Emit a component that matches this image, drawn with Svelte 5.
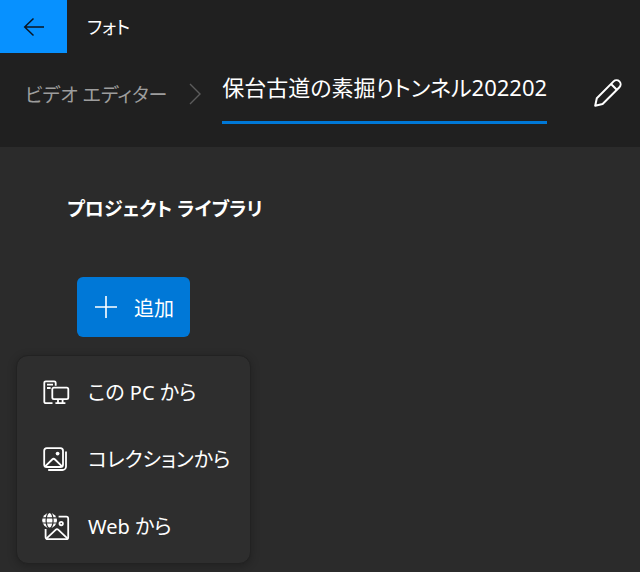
<script>
  const PROJECT_NAME = '保台古道の素掘りトンネル202202';

  const SOURCES = [
    { id: 'pc', label: 'この PC から' },
    { id: 'collection', label: 'コレクションから' },
    { id: 'web', label: 'Web から' },
  ];

  let menuOpen = $state(true);
</script>

<div class="app">
  <header class="top">
    <div class="title-bar">
      <button class="back" aria-label="戻る">
        <svg width="22" height="20" viewBox="0 0 22 20" fill="none" stroke="currentColor" stroke-width="1.5">
          <path d="M21 10H1.5M10.5 1.5 1.7 10l8.8 8.5" />
        </svg>
      </button>
      <span class="app-name">フォト</span>
    </div>

    <nav class="crumbs">
      <a class="crumb" href="#editor">ビデオ エディター</a>
      <svg class="chevron" width="12" height="22" viewBox="0 0 12 22" fill="none" stroke="currentColor" stroke-width="1.4">
        <path d="M1 1l10 10L1 21" />
      </svg>
      <h1 class="project">{PROJECT_NAME}</h1>
      <button class="edit" aria-label="名前の変更">
        <svg width="28" height="28" viewBox="0 0 28 28" fill="none" stroke="currentColor" stroke-width="2" stroke-linejoin="round">
          <path d="M1.2 26.8l1.6-7.6L19.6 2.4a4.1 4.1 0 0 1 5.8 5.8L8.6 25z" />
          <path d="M17 5l5.8 5.8" />
        </svg>
      </button>
    </nav>
  </header>

  <main class="library">
    <h2>プロジェクト ライブラリ</h2>

    <div class="add-wrap">
      <button class="add" aria-expanded={menuOpen} onclick={() => (menuOpen = !menuOpen)}>
        <svg width="22" height="22" viewBox="0 0 22 22" fill="none" stroke="currentColor" stroke-width="1.6">
          <path d="M11 0v22M0 11h22" />
        </svg>
        追加
      </button>

      {#if menuOpen}
        <div class="menu" role="menu">
          {#each SOURCES as source (source.id)}
            <button class="menu-item" role="menuitem">
              <svg width="28" height="28" viewBox="0 0 28 28" fill="none" stroke="currentColor" stroke-width="1.8" stroke-linejoin="round">
                {#if source.id === 'pc'}
                  <path d="M10.5 24.2H3.8a1.5 1.5 0 0 1-1.5-1.5V3.8a1.5 1.5 0 0 1 1.5-1.5h8.4a1.5 1.5 0 0 1 1.5 1.5v3" />
                  <path d="M5 5.6h6M5 9h3.6" />
                  <rect x="10.3" y="8.6" width="16" height="11.6" rx="1.6" />
                  <path d="M16 20.2v3.6M20.6 20.2v3.6M13.4 24.2h10" />
                {:else if source.id === 'collection'}
                  <rect x="2.2" y="2.2" width="18.8" height="18.8" rx="2.6" />
                  <path d="M3.4 20.2l6.8-6.7a2 2 0 0 1 2.8 0l6.8 6.7" />
                  <circle cx="15.6" cy="7.6" r="1.9" fill="currentColor" stroke="none" />
                  <path d="M24 5.6v14.8a3.6 3.6 0 0 1-3.6 3.6H6.2" />
                {:else}
                  <path d="M16.6 3.6h7.6a2 2 0 0 1 2 2v18.6a2 2 0 0 1-2 2H5.6a2 2 0 0 1-2-2V16" />
                  <path d="M4.6 25.4l9-8.6a2 2 0 0 1 2.8 0l9 8.6" />
                  <circle cx="19.2" cy="10.6" r="1.7" />
                  <circle cx="7.6" cy="7.4" r="7.4" fill="currentColor" stroke="none" />
                  <g class="gap">
                    <ellipse cx="7.6" cy="7.4" rx="3.5" ry="8" />
                    <path d="M0 4.8h15.2M0 10h15.2" />
                  </g>
                {/if}
              </svg>
              <span>{source.label}</span>
            </button>
          {/each}
        </div>
      {/if}
    </div>
  </main>
</div>

<style>
  :global(body) { margin: 0; background: #2b2b2b; }

  .app {
    min-height: 100vh;
    background: #2b2b2b; color: #fff;
    font-family: "Noto Sans", "Noto Sans CJK JP", sans-serif;
    font-feature-settings: "palt";
  }

  button {
    padding: 0; border: 0; background: none; color: inherit;
    font: inherit; font-feature-settings: inherit; cursor: pointer;
  }
  svg { display: block; flex-shrink: 0; }
  h1, h2 { margin: 0; }

  .top { background: #202020; }

  .title-bar { display: flex; align-items: center; gap: 20px; }
  .back {
    display: flex; align-items: center; justify-content: center;
    width: 67px; height: 53px;
    background: #0791ff; color: #0b1622;
  }
  .app-name { font-size: 18px; line-height: 24px; }

  .crumbs { display: flex; align-items: flex-start; padding: 16px 18px 23px 25px; }
  .crumb {
    margin-top: 10px;
    font-size: 19px; line-height: 32px; color: #9d9d9d;
    text-decoration: none; white-space: nowrap;
  }
  .chevron { margin: 14px 21px 0 22px; color: #5c5c5c; }
  .project {
    padding-bottom: 16px; border-bottom: 3px solid #0078d7;
    font-size: 22px; font-weight: 400; line-height: 36px; white-space: nowrap;
  }
  .edit { margin: 10px 0 0 auto; }

  .library { padding: 46px 67px 0; }
  h2 { font-size: 19px; font-weight: 600; line-height: 32px; }

  .add-wrap { position: relative; width: fit-content; margin: 52px 0 0 10px; }
  .add {
    display: flex; align-items: center; gap: 17px;
    height: 60px; padding: 0 16px 0 18px;
    background: #0078d7; border-radius: 6px;
    font-size: 20px;
  }

  .menu {
    position: absolute; top: 78px; left: -61px;
    display: flex; flex-direction: column;
    box-sizing: border-box; width: 235px; padding: 3px 0;
    background: #2e2e2e; border: 1px solid #222; border-radius: 12px;
    box-shadow: 0 2px 8px rgba(0, 0, 0, 0.25);
  }
  .menu-item {
    display: flex; align-items: center; gap: 18px;
    height: 67px; padding: 0 25px;
    font-size: 20px; line-height: 24px; white-space: nowrap;
  }
  .menu-item:hover { background: #383838; }
  .gap { stroke: #2e2e2e; stroke-width: 1.2; }
</style>
